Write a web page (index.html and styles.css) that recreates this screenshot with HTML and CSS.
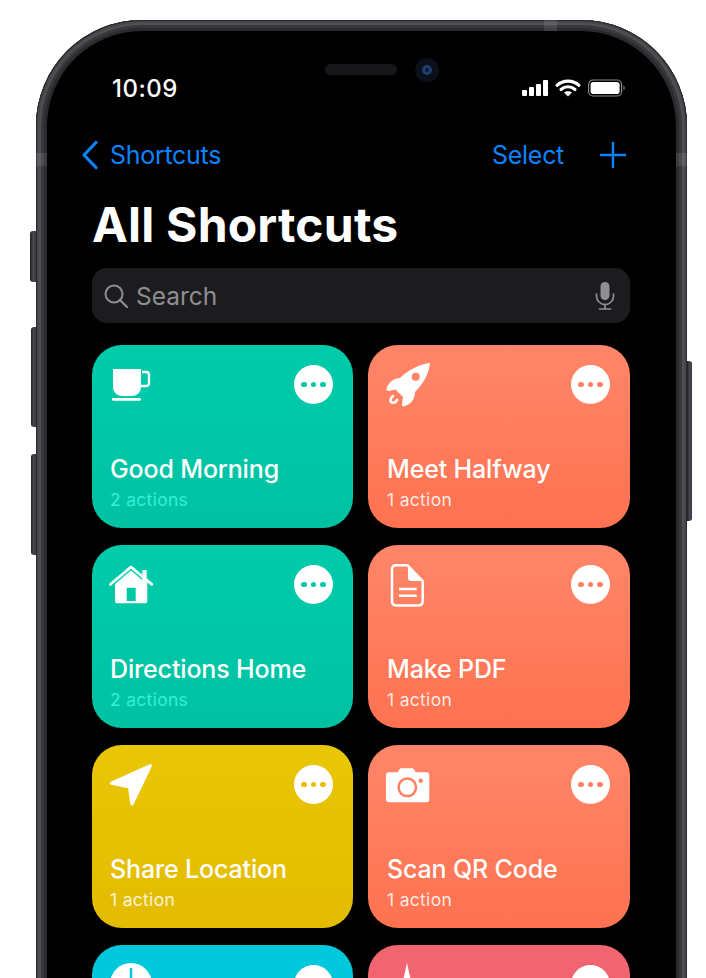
FILE: index.html
```html
<!DOCTYPE html>
<html lang="en">
<head>
<meta charset="utf-8">
<title>All Shortcuts</title>
<link rel="stylesheet" href="styles.css">
</head>
<body>
<div class="phone">
  <span class="side side-l side-1"></span>
  <span class="side side-l side-2"></span>
  <span class="side side-l side-3"></span>
  <span class="side side-r side-4"></span>
  <span class="band band-l"></span>
  <span class="band band-r"></span>
  <span class="band band-t"></span>
  <div class="screen">
    <span class="speaker"></span>
    <span class="camera"><span class="lens"></span></span>
    <div class="status">
      <span class="time">10:09</span>
      <svg class="status-icons" viewBox="0 0 104 18" width="104" height="18">
        <g fill="#fff">
          <rect x="0" y="11" width="5" height="6" rx="1"/>
          <rect x="7" y="8" width="5" height="9" rx="1"/>
          <rect x="14" y="5" width="5" height="12" rx="1"/>
          <rect x="21" y="1" width="5" height="16" rx="1"/>
          <path d="M42 13.500c2.300-1.800 5.700-1.800 8 0L46 17.500z"/>
        </g>
        <g fill="none" stroke="#fff" stroke-width="3.100" stroke-linecap="round">
          <path d="M35 6.300c6-5.600 16-5.600 22 0"/>
          <path d="M39 10.500c4-3.600 10-3.600 14 0"/>
        </g>
        <rect x="66.600" y="1" width="33" height="16" rx="4.500" fill="none" stroke="#8b8b8d" stroke-width="1.200"/>
        <rect x="68.600" y="3" width="29" height="12" rx="2.800" fill="#fff"/>
        <path d="M101.500 6.500c1.600.5 1.600 4.500 0 5z" fill="#8b8b8d"/>
      </svg>
    </div>
    <nav class="nav">
      <a class="back">
        <svg class="chevron" viewBox="0 0 17 30" width="17" height="30"><path d="M15 2.500 3 15l12 12.500" fill="none" stroke="#0a84ff" stroke-width="3.200" stroke-linecap="round" stroke-linejoin="round"/></svg>
        <span>Shortcuts</span>
      </a>
      <div class="nav-actions">
        <a class="select">Select</a>
        <svg class="plus" viewBox="0 0 26 26" width="26" height="26"><path d="M13 0v26M0 13h26" stroke="#0a84ff" stroke-width="2.400" fill="none"/></svg>
      </div>
    </nav>
    <h1 class="title">All Shortcuts</h1>
    <div class="search">
      <svg class="search-icon" viewBox="0 0 24 24" width="24" height="24"><circle cx="10" cy="10" r="8.500" fill="none" stroke="#8e8e93" stroke-width="2"/><path d="m16 16 7 7" stroke="#8e8e93" stroke-width="2.200" stroke-linecap="round"/></svg>
      <span class="search-text">Search</span>
      <svg class="mic" viewBox="0 0 20 28" width="20" height="28"><rect x="5.500" y="0" width="9" height="18" rx="4.500" fill="#8e8e93"/><path d="M1.500 12v2a8.500 8.500 0 0 0 17 0v-2M10 22.500V27M4.500 27h11" fill="none" stroke="#8e8e93" stroke-width="1.700" stroke-linecap="round"/></svg>
    </div>
    <div class="grid">
      <article class="card teal">
        <div class="card-head">
          <svg class="icon" viewBox="0 0 50 50" width="50" height="50">
            <path d="M7 8h28v18c0 5-4 9-9 9H16c-5 0-9-4-9-9z" fill="#fff"/>
            <path d="M36 11h4c2 0 3 1 3 3v8c0 2-1 3-3 3h-5" fill="none" stroke="#fff" stroke-width="2.300"/>
            <rect x="6" y="37" width="29" height="2.800" rx="1.300" fill="#fff"/>
          </svg>
          <button class="more"><i></i><i></i><i></i></button>
        </div>
        <div class="card-text">
          <div class="name">Good Morning</div>
          <div class="count">2 actions</div>
        </div>
      </article>
      <article class="card coral">
        <div class="card-head">
          <svg class="icon" viewBox="0 0 50 50" width="50" height="50">
            <path fill="#fff" fill-rule="evenodd" d="M48 2C38 3 26 9 18 17 12 17 7 21 4.700 27c-.7 2 .3 3.500 2.300 3l6.500-1.500L21 36l-1 7c0 2 1 3 3 2 6-2 10-7 10-14C42 22 47 12 48 2zM33.700 11.700a4 4 0 1 1 0 8 4 4 0 0 1 0-8z"/>
            <path d="M11 35c-3 2-3 6-1 6.500 2 .5 4-.5 5-2.500" fill="none" stroke="#fff" stroke-width="2.600" stroke-linecap="round"/>
          </svg>
          <button class="more"><i></i><i></i><i></i></button>
        </div>
        <div class="card-text">
          <div class="name">Meet Halfway</div>
          <div class="count">1 action</div>
        </div>
      </article>
      <article class="card teal">
        <div class="card-head">
          <svg class="icon" viewBox="0 0 50 50" width="50" height="50">
            <path fill="#fff" fill-rule="evenodd" d="M36.300 9h4.400v9l.6 5v17c0 1.500-1 2.300-2.300 2.300H11.300C10 42.300 9 41.500 9 40V23L25 9.500l11.300 9.500zM20.700 26.700V40h9V26.700z"/>
            <path d="M4.500 23.300 25 6l20.800 17.300" fill="none" stroke="#fff" stroke-width="2.800" stroke-linecap="round" stroke-linejoin="round"/>
          </svg>
          <button class="more"><i></i><i></i><i></i></button>
        </div>
        <div class="card-text">
          <div class="name">Directions Home</div>
          <div class="count">2 actions</div>
        </div>
      </article>
      <article class="card coral">
        <div class="card-head">
          <svg class="icon" viewBox="0 0 50 50" width="50" height="50">
            <path d="M14 4.300h11.500L40.700 20v20c0 3-1.500 4.500-4.500 4.500H14.500c-3 0-4.500-1.500-4.500-4.500V8.800c0-3 1.500-4.500 4-4.500z" fill="none" stroke="#fff" stroke-width="2.500" stroke-linejoin="round"/>
            <path d="M26 5.500 39.500 20H29c-2 0-3-1-3-3z" fill="#fff"/>
            <path d="M17 28h17.700M17 34.700h17.700" stroke="#fff" stroke-width="2.400" fill="none"/>
          </svg>
          <button class="more"><i></i><i></i><i></i></button>
        </div>
        <div class="card-text">
          <div class="name">Make PDF</div>
          <div class="count">1 action</div>
        </div>
      </article>
      <article class="card yellow">
        <div class="card-head">
          <svg class="icon" viewBox="0 0 50 50" width="50" height="50">
            <path d="M44.300 4.700 5.500 22.300l18 3.700L26 43z" fill="#fff" stroke="#fff" stroke-width="3.200" stroke-linejoin="round"/>
          </svg>
          <button class="more"><i></i><i></i><i></i></button>
        </div>
        <div class="card-text">
          <div class="name">Share Location</div>
          <div class="count">1 action</div>
        </div>
      </article>
      <article class="card coral">
        <div class="card-head">
          <svg class="icon" viewBox="0 0 50 50" width="50" height="50">
            <path fill="#fff" d="M7 11.300h7.500c1 0 1.700-.5 2.200-1.500l.6-1c.5-1 1.200-1.500 2.200-1.500h10.500c1 0 1.700.5 2.200 1.500l.6 1c.5 1 1.200 1.500 2.200 1.500H44.300c2 0 3 1 3 3v24c0 2-1 3-3 3H7c-2 0-3-1-3-3v-24c0-2 1-3 3-3z"/>
            <circle cx="25.300" cy="26.300" r="8.800" fill="none" stroke="#ff7f60" stroke-width="2.500"/>
            <circle cx="38.700" cy="19.700" r="2.200" fill="#ff7f60"/>
          </svg>
          <button class="more"><i></i><i></i><i></i></button>
        </div>
        <div class="card-text">
          <div class="name">Scan QR Code</div>
          <div class="count">1 action</div>
        </div>
      </article>
      <article class="card cyan">
        <div class="card-head">
          <svg class="icon" viewBox="0 0 50 50" width="50" height="50">
            <circle cx="25" cy="23" r="21" fill="#fff"/>
            <path d="M25 7v16" stroke="#00c8dc" stroke-width="2.500"/>
          </svg>
          <button class="more"><i></i><i></i><i></i></button>
        </div>
      </article>
      <article class="card pink">
        <div class="card-head">
          <svg class="icon" viewBox="0 0 50 50" width="50" height="50">
            <path d="M25 2l4 18 18 5-18 4-4 18-4-18-18-4 18-5z" fill="#fff"/>
          </svg>
          <button class="more"><i></i><i></i><i></i></button>
        </div>
      </article>
    </div>
  </div>
</div>
</body>
</html>
```
FILE: styles.css
```css
* { box-sizing: border-box; }
html, body { margin: 0; height: 978px; overflow: hidden; background: #fff; }
body { font-family: Inter, "Liberation Sans", sans-serif; color: #fff; }

.phone {
  position: relative;
  width: 651px;
  height: 1100px;
  margin: 20px 0 0 36px;
  padding: 11px;
  border-radius: 106px 106px 0 0;
  background: #333337;
  box-shadow: inset 0 0 0 1px #29292c, inset 0 0 0 3px #47474c, inset 0 0 0 5px #4f4f55, inset 0 0 0 8px #38383c, inset 0 0 0 11px #2b2b2e;
}
.screen {
  position: relative;
  height: 100%;
  padding: 39px 46px 0 45px;
  border-radius: 95px 95px 0 0;
  background: #000;
  overflow: hidden;
}
.side { position: absolute; background: linear-gradient(90deg, #1f1f22, #4a4a50 55%, #36363a); }
.side-l { border-radius: 3px 0 0 3px; }
.side-r { border-radius: 0 3px 3px 0; }
.side-1 { left: -6px; top: 211px; width: 6px; height: 51px; }
.side-2 { left: -5px; top: 307px; width: 5px; height: 100px; }
.side-3 { left: -5px; top: 434px; width: 5px; height: 101px; }
.side-4 { right: -5px; top: 341px; width: 5px; height: 160px; }
.band { position: absolute; background: rgba(255,255,255,.1); }
.band-l { left: 0; top: 133px; width: 11px; height: 13px; }
.band-r { right: 0; top: 133px; width: 11px; height: 13px; }
.band-t { left: 508px; top: 0; width: 13px; height: 11px; }

.speaker {
  position: absolute;
  left: 278px;
  top: 33px;
  width: 72px;
  height: 11px;
  border-radius: 6px;
  background: #17171a;
}
.camera {
  position: absolute;
  left: 368px;
  top: 27px;
  width: 24px;
  height: 24px;
  display: flex;
  align-items: center;
  justify-content: center;
  border-radius: 50%;
  background: #0b1019;
}
.lens { width: 10px; height: 10px; border-radius: 50%; background: #0e1a30; border: 3px solid #1f3f74; }

.status {
  display: flex;
  align-items: center;
  justify-content: space-between;
  height: 36px;
  padding: 0 4px 0 20px;
}
.time { font-size: 24px; font-weight: 500; letter-spacing: 0.5px; }
.status-icons { display: block; }

.nav {
  display: flex;
  align-items: center;
  justify-content: space-between;
  height: 36px;
  margin-top: 31px;
  padding-right: 4px;
  color: #0a84ff;
  font-size: 25px;
}
.back { display: flex; align-items: center; gap: 12px; margin-left: -11px; letter-spacing: -0.3px; }
.chevron { display: block; }
.nav-actions { display: flex; align-items: center; gap: 36px; }
.select { letter-spacing: -0.3px; }
.plus { display: block; }

.title {
  height: 56px;
  margin: 24px 0 0;
  font-size: 48px;
  line-height: 56px;
  font-weight: 700;
  letter-spacing: 0.2px;
}

.search {
  display: flex;
  align-items: center;
  height: 55px;
  margin-top: 15px;
  padding: 0 15px 0 12px;
  border-radius: 15px;
  background: #1c1c1e;
  color: #8e8e93;
  font-size: 24.5px;
}
.search-icon { display: block; }
.search-text { margin-left: 8px; flex: 1; }
.mic { display: block; }

.grid {
  display: grid;
  grid-template-columns: 261px 262px;
  column-gap: 15px;
  row-gap: 17px;
  margin-top: 22px;
}
.card {
  display: flex;
  flex-direction: column;
  justify-content: space-between;
  height: 183px;
  padding: 16px 20px 17px 14px;
  border-radius: 30px;
}
.teal { background: linear-gradient(#00cbaa, #00c2a3); color: #00c9a8; }
.coral { background: linear-gradient(#ff8669, #ff7250); color: #ff7f60; }
.yellow { background: linear-gradient(#e9c606, #e3bb00); color: #e6c000; }
.cyan { background: #00c8dc; color: #00c8dc; }
.pink { background: #f0656f; color: #f0656f; }

.card-head { display: flex; justify-content: space-between; align-items: flex-start; }
.icon { display: block; }
.more {
  display: flex;
  align-items: center;
  justify-content: center;
  gap: 3.8px;
  width: 39px;
  height: 39px;
  margin-top: 4px;
  padding: 0;
  border: 0;
  border-radius: 50%;
  background: #fff;
  color: inherit;
}
.more i { width: 5.500px; height: 5.500px; border-radius: 50%; background: currentColor; }

.card-text { padding-left: 4px; }
.coral .card-text { padding-left: 5px; }
.name { color: #fff; font-size: 25px; line-height: 30px; font-weight: 500; letter-spacing: -0.15px; }
.count { margin-top: 5px; font-size: 17.500px; line-height: 22px; letter-spacing: 0.3px; color: rgba(255,255,255,.85); }
.teal .count { color: #35f0dc; }
```
